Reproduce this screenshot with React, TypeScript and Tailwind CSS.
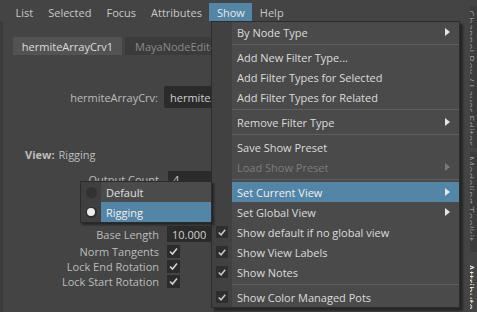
import React from "react";

type MenuEntry =
  | { kind: "item"; label: string; arrow?: boolean; disabled?: boolean; active?: boolean; checked?: boolean }
  | { kind: "sep" };

const showMenu: MenuEntry[] = [
  { kind: "item", label: "By Node Type", arrow: true },
  { kind: "sep" },
  { kind: "item", label: "Add New Filter Type..." },
  { kind: "item", label: "Add Filter Types for Selected" },
  { kind: "item", label: "Add Filter Types for Related" },
  { kind: "sep" },
  { kind: "item", label: "Remove Filter Type", arrow: true },
  { kind: "sep" },
  { kind: "item", label: "Save Show Preset" },
  { kind: "item", label: "Load Show Preset", arrow: true, disabled: true },
  { kind: "sep" },
  { kind: "item", label: "Set Current View", arrow: true, active: true },
  { kind: "item", label: "Set Global View", arrow: true },
  { kind: "item", label: "Show default if no global view", checked: true },
  { kind: "item", label: "Show View Labels", checked: true },
  { kind: "item", label: "Show Notes", checked: true },
  { kind: "sep" },
  { kind: "item", label: "Show Color Managed Pots", checked: true },
];

const menuBar = ["List", "Selected", "Focus", "Attributes", "Show", "Help"];

const Check = ({ color = "#d4d4d4" }: { color?: string }) => (
  <svg width="13" height="13" viewBox="0 0 13 13">
    <polyline points="3,6.5 5.5,9 10,3.5" fill="none" stroke={color} strokeWidth="1.6" />
  </svg>
);

const Arrow = ({ dim }: { dim?: boolean }) => (
  <svg width="5" height="8" viewBox="0 0 5 8">
    <polygon points="0,0 5,4 0,8" fill={dim ? "#7a7a7a" : "#e6e6e6"} />
  </svg>
);

const CheckRow = ({ label }: { label: string }) => (
  <div className="flex h-[15px] items-center">
    <span className="w-[156px] text-right text-[#bdbdbd]">{label}</span>
    <span className="ml-[8px] flex h-[13px] w-[13px] items-center justify-center bg-[#2b2b2b]">
      <Check />
    </span>
  </div>
);

export default function App() {
  return (
    <div className="relative flex h-[312px] w-[477px] overflow-hidden bg-[#444444] font-['Open_Sans',sans-serif] text-[11px] leading-none text-[#c8c8c8]">
      {/* main panel */}
      <div className="flex w-[470px] flex-col">
        <div className="flex h-[21px] items-end pl-[8px]">
          {menuBar.map((m) => (
            <div
              key={m}
              className={`flex h-[18px] items-center px-[7.5px] ${m === "Show" ? "bg-[#5285a6] text-[#e8e8e8]" : "text-[#c8c8c8]"}`}
            >
              {m}
            </div>
          ))}
        </div>

        <div className="flex flex-1 flex-col border-l-[3px] border-[#3b3b3b]">
          {/* tabs */}
          <div className="mt-[16px] flex h-[18px] gap-[3px] pl-[10px]">
            <div className="flex w-[109px] items-center justify-center rounded-t-[2px] bg-[#535353] text-[#dedede]">
              hermiteArrayCrv1
            </div>
            <div className="flex w-[120px] items-center rounded-t-[2px] bg-[#3b3b3b] pl-[10px] text-[#8a8a8a]">
              MayaNodeEditorSavedTabsInfo
            </div>
          </div>

          <div className="mt-[31px] flex h-[22px] items-center">
            <span className="w-[155px] text-right text-[#bdbdbd]">hermiteArrayCrv:</span>
            <span className="ml-[6px] flex h-full w-[120px] items-center rounded-[2px] bg-[#2b2b2b] pl-[6px] text-[#d0d0d0]">
              hermiteArrayCrv1
            </span>
          </div>

          <div className="mt-[38px] flex h-[16px] items-center pl-[22px] text-[#bdbdbd]">
            <span className="font-bold">View:</span>
            <span className="ml-[4px]">Rigging</span>
          </div>

          <div className="mt-[9px] flex h-[17px] items-center">
            <span className="w-[156px] text-right text-[#bdbdbd]">Output Count</span>
            <span className="ml-[9px] flex h-full w-[44px] items-center bg-[#2b2b2b] pl-[5px] text-[#d0d0d0]">4</span>
          </div>

          <div className="mt-[38px] flex h-[16px] items-center">
            <span className="w-[156px] text-right text-[#bdbdbd]">Base Length</span>
            <span className="ml-[8px] flex h-full w-[44px] items-center bg-[#2b2b2b] pl-[5px] text-[#d0d0d0]">10.000</span>
          </div>

          <div className="mt-[2px] flex flex-col">
            <CheckRow label="Norm Tangents" />
            <CheckRow label="Lock End Rotation" />
            <CheckRow label="Lock Start Rotation" />
          </div>
        </div>
      </div>

      {/* docked tab strip on the right */}
      <div className="flex w-[7px] flex-col pt-[6px]">
        <div className="h-[142px] overflow-hidden bg-[#3c3c3c] pt-[4px] text-[11px] leading-[14px] text-[#8e8e8e] [writing-mode:vertical-rl]">
          Channel Box / Layer Editor
        </div>
        <div className="mt-[4px] h-[100px] overflow-hidden bg-[#3c3c3c] pt-[4px] text-[11px] leading-[14px] text-[#8e8e8e] [writing-mode:vertical-rl]">
          Modeling Toolkit
        </div>
        <div className="mt-[8px] flex-1 overflow-hidden pt-[4px] text-[11px] leading-[14px] text-[#f0f0f0] [writing-mode:vertical-rl]">
          Attribute Editor
        </div>
      </div>

      {/* Show menu */}
      <div className="absolute left-[211px] top-[21px] w-[249px] border border-[#2c2c2c] bg-[#4a4a4a] text-[#dcdcdc] shadow-[3px_3px_2px_rgba(0,0,0,0.45)]">
        {showMenu.map((e, i) =>
          e.kind === "sep" ? (
            <div key={i} className="flex h-[5px]">
              <div className="w-[20px] bg-[#414141]" />
              <div className="flex flex-1 items-center">
                <div className="h-px w-full bg-[#5f5f5f]" />
              </div>
            </div>
          ) : (
            <div key={i} className="flex h-[20px]">
              <div className="flex w-[20px] items-center bg-[#414141]">
                {e.checked && (
                  <span className="ml-[4px] flex h-[12px] w-[12px] items-center justify-center bg-[#2e2e2e]">
                    <Check color="#c8c8c8" />
                  </span>
                )}
              </div>
              <div
                className={`flex flex-1 items-center pl-[5px] pr-[9px] ${e.active ? "bg-[#5285a6] text-[#f0f0f0]" : ""} ${e.disabled ? "text-[#7c7c7c]" : ""}`}
              >
                <span>{e.label}</span>
                {e.arrow && (
                  <span className="ml-auto flex">
                    <Arrow dim={e.disabled} />
                  </span>
                )}
              </div>
            </div>
          )
        )}
      </div>

      {/* View option popup */}
      <div className="absolute left-[80px] top-[181px] w-[132px] border border-[#2b2b2b] bg-[#4b4b4b] text-[#e0e0e0] shadow-[2px_2px_2px_rgba(0,0,0,0.45)]">
        <div className="flex h-[20px]">
          <div className="flex w-[20px] items-center justify-center bg-[#3f3f3f]">
            <span className="h-[11px] w-[11px] rounded-full bg-[#323232]" />
          </div>
          <div className="flex flex-1 items-center pl-[5px]">Default</div>
        </div>
        <div className="flex h-[20px]">
          <div className="flex w-[20px] items-center justify-center bg-[#3f3f3f]">
            <span className="flex h-[11px] w-[11px] items-center justify-center rounded-full bg-[#2c2c2c]">
              <span className="h-[8px] w-[8px] rounded-full bg-[#ececec]" />
            </span>
          </div>
          <div className="flex flex-1 items-center bg-[#5285a6] pl-[5px] text-[#f0f0f0]">Rigging</div>
        </div>
      </div>
    </div>
  );
}
